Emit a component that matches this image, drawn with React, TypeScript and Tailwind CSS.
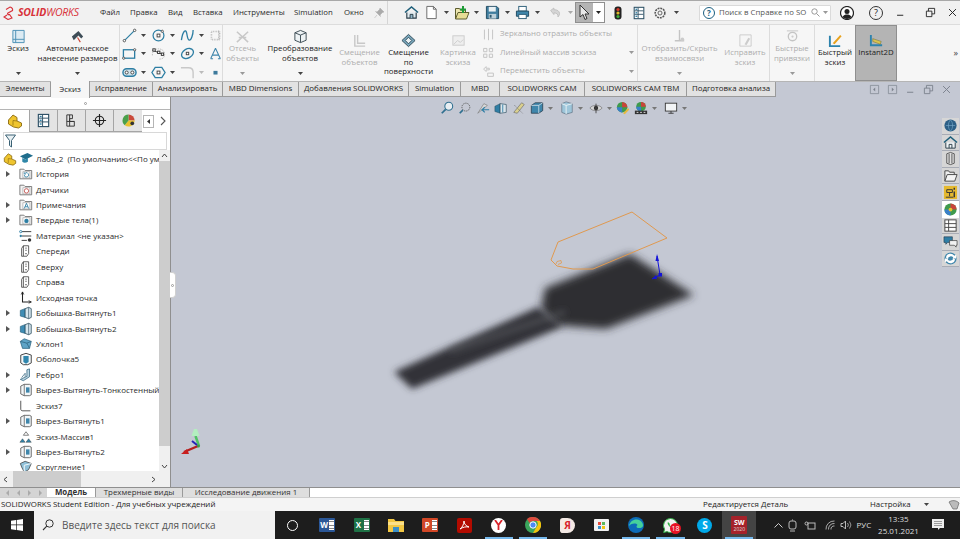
import React from "react";

type C = { children?: React.ReactNode; className?: string };

const Ico = ({ s = 16, children, className }: { s?: number; children: React.ReactNode; className?: string }) => (
  <svg width={s} height={s} viewBox="0 0 16 16" fill="none" className={className ?? "shrink-0"}>
    {children}
  </svg>
);

const Caret = ({ c = "#444" }: { c?: string }) => (
  <svg width="5" height="3" viewBox="0 0 5 3" className="shrink-0">
    <path d="M0 0h5L2.5 3z" fill={c} />
  </svg>
);

/* ---------- title bar icons ---------- */
const Home = () => (
  <Ico s={15}>
    <path d="M1 8 8 2l7 6" stroke="#1e5f7a" strokeWidth="1.6" />
    <path d="M3 8v6h10V8" stroke="#2a3d48" strokeWidth="1.2" fill="#dfe9ee" />
    <path d="M6.5 14v-4h3v4" stroke="#2a3d48" fill="#8fb5c7" />
  </Ico>
);
const Doc = () => (
  <Ico s={15}>
    <path d="M3 1.5h7l3 3v10H3z" stroke="#666" fill="#fff" />
    <path d="M10 1.5v3h3" stroke="#666" />
  </Ico>
);
const OpenI = () => (
  <Ico s={16}>
    <path d="M1.500 14V3.500h4l1 1.500h5v2" stroke="#5c5c2e" fill="#ece6b0" />
    <path d="M1.500 14 4 7.500h11L12.500 14z" stroke="#5c5c2e" fill="#e7dd95" />
    <path d="M9 1v7M6 4.500h6" stroke="#1f9b36" strokeWidth="2" />
  </Ico>
);
const Save = () => (
  <Ico s={15}>
    <path d="M1.500 1.500h11l2 2v11h-13z" fill="#3f7d9e" stroke="#1f4a60" />
    <rect x="4" y="2" width="7.500" height="5" fill="#e9f0f3" />
    <rect x="4" y="9.500" width="8" height="5" fill="#bcd0da" />
    <rect x="5" y="10.500" width="2" height="3" fill="#2c5870" />
  </Ico>
);
const Printer = () => (
  <Ico s={15}>
    <rect x="4" y="1.500" width="8" height="5" fill="#fff" stroke="#2b5d78" />
    <path d="M1.500 6.500h13v5.500h-13z" fill="#3f86ab" stroke="#1f4a60" />
    <rect x="4" y="10" width="8" height="4.500" fill="#fff" stroke="#2b5d78" />
  </Ico>
);
const Undo = () => (
  <Ico s={13}>
    <path d="M2 5.500 6 2.500v2c4 0 7 1.500 7 5 0 1.500-1 3-2 4 .5-3-1-5-5-5v2z" fill="#d5d5d5" stroke="#bbb" />
  </Ico>
);
const Pointer = () => (
  <svg width="14" height="17" viewBox="0 0 14 17" className="shrink-0">
    <path d="M2 1v12l3-2.500 2 5 2-1-2-4.500h4z" fill="#e8e8e8" stroke="#333" strokeWidth="1" />
  </svg>
);
const Traffic = () => (
  <svg width="8" height="14" viewBox="0 0 8 14" className="shrink-0">
    <rect x="0.500" y="0.500" width="7" height="13" rx="3" fill="#222" />
    <circle cx="4" cy="3.500" r="1.600" fill="#d83a2a" />
    <circle cx="4" cy="7" r="1.600" fill="#d9b82a" />
    <circle cx="4" cy="10.500" r="1.600" fill="#3fae3a" />
  </svg>
);
const ListI = ({ s = 14 }: { s?: number }) => (
  <Ico s={s}>
    <rect x="2.500" y="1.500" width="11" height="13" fill="#fff" stroke="#2c4f64" strokeWidth="1.200" />
    <path d="M3 5.500h10M3 9.500h10M7 2v12" stroke="#2c4f64" />
    <rect x="4" y="3" width="2" height="1.500" fill="#2d7ea3" />
    <rect x="4" y="7" width="2" height="1.500" fill="#2d7ea3" />
    <rect x="4" y="11" width="2" height="1.500" fill="#2d7ea3" />
  </Ico>
);
const Gear = () => (
  <Ico s={14}>
    <circle cx="8" cy="8" r="5.500" stroke="#555" strokeDasharray="2.200 1" strokeWidth="1.800" />
    <circle cx="8" cy="8" r="2.300" stroke="#555" />
  </Ico>
);

/* ---------- ribbon ---------- */
const RibbonCol = ({
  w,
  icon,
  lines,
  off,
  caret,
  top = "pt-[3px]",
}: {
  w: string;
  icon: React.ReactNode;
  lines: string[];
  off?: boolean;
  caret?: boolean;
  top?: string;
}) => (
  <div className={`${w} ${top} flex h-full shrink-0 flex-col items-center`}>
    <div className="flex h-[16px] items-center justify-center">{icon}</div>
    <div className={`text-center leading-[9.500px] ${off ? "text-[#adadad]" : "text-[#222]"}`}>
      {lines.map((l) => (
        <div key={l} className="whitespace-nowrap">
          {l}
        </div>
      ))}
    </div>
    {caret && (
      <div className="mt-auto pb-[6px]">
        <Caret c={off ? "#999" : "#444"} />
      </div>
    )}
  </div>
);

const Sep = () => <div className="h-full w-px shrink-0 bg-[#dcdcdc]" />;

const blue = "#2d7ea3";
const GridIcon = ({ d }: { d: React.ReactNode }) => <Ico s={15}>{d}</Ico>;

const sketchGrid: React.ReactNode[] = [
  <GridIcon key="a" d={<><path d="M2 14 14 2" stroke={blue} strokeWidth="1.300" /><circle cx="2.500" cy="13.500" r="1.300" fill="#fff" stroke="#555" /><circle cx="13.500" cy="2.500" r="1.300" fill="#fff" stroke="#555" /></>} />,
  <GridIcon key="b" d={<><circle cx="8" cy="8" r="5.800" stroke={blue} strokeWidth="1.300" /><rect x="6.500" y="6.500" width="3" height="3" fill="#fff" stroke="#444" /><circle cx="12" cy="3.500" r="1.200" fill="#fff" stroke="#555" /></>} />,
  <GridIcon key="c" d={<path d="M1.500 13C3 3 6 1 7 5s1 8 3 8 4-6 4-11" stroke={blue} strokeWidth="1.400" />} />,
  <GridIcon key="d" d={<><path d="M3 3h10v10H3z" stroke="#bbb" strokeWidth="2" strokeDasharray="1 1" /><path d="M12 2v12" stroke="#999" strokeDasharray="1 1" /></>} />,
  <GridIcon key="e" d={<><rect x="1.500" y="4" width="12" height="9" stroke={blue} strokeWidth="1.400" /><circle cx="1.800" cy="13" r="1.200" fill="#fff" stroke="#555" /><circle cx="13.500" cy="4" r="1.200" fill="#fff" stroke="#555" /></>} />,
  <GridIcon key="f" d={<><path d="M1.500 10C1 5 5 3 8 3s6.500 2 6.500 6-3 5-6 5" stroke="#bbb" strokeDasharray="1.500 1" /><path d="M1.500 4.500 8 7l5 2" stroke="#333" /><rect x="2" y="3" width="2.500" height="2.500" fill="#fff" stroke="#333" /><rect x="7" y="5.500" width="2.500" height="2.500" fill="#fff" stroke="#333" /><rect x="11" y="7.500" width="2.500" height="2.500" fill="#fff" stroke="#333" /></>} />,
  <GridIcon key="g" d={<><ellipse cx="8" cy="8" rx="6.800" ry="4.800" transform="rotate(-30 8 8)" stroke={blue} strokeWidth="1.400" /><rect x="6.700" y="6.700" width="2.600" height="2.600" fill="#fff" stroke="#444" /></>} />,
  <GridIcon key="h" d={<path d="M8 1.500 2 14.500M8 1.500l6 13M4.500 10h7M2 14.500h3M11 14.500h3" stroke="#3f86ab" strokeWidth="1.300" />} />,
  <GridIcon key="i" d={<><rect x="1" y="4" width="14" height="8" rx="4" stroke={blue} strokeWidth="1.500" fill="#cfe3ec" /><circle cx="5" cy="8" r="1.600" fill="#fff" stroke="#444" /><circle cx="11" cy="8" r="1.600" fill="#fff" stroke="#444" /></>} />,
  <GridIcon key="j" d={<><path d="M4.500 2.500h7L15 8l-3.500 5.500h-7L1 8z" stroke={blue} strokeWidth="1.400" /><rect x="6.500" y="6.500" width="3" height="3" fill="#fff" stroke="#444" /></>} />,
  <GridIcon key="k" d={<path d="M1 3h8c3 0 5 2 5 5v6" stroke="#c8c8c8" strokeWidth="1.500" />} />,
  <GridIcon key="l" d={<rect x="5.500" y="6" width="5" height="4.500" fill="#3d7a9c" />} />,
];

const Ribbon = () => (
  <div className="flex h-[56px] shrink-0 bg-[#f6f6f6] text-[7.800px]">
    <RibbonCol
      w="w-[36px]"
      lines={["Эскиз"]}
      caret
      icon={
        <Ico s={15}>
          <path d="M2 1.500h12v13H2z" fill="#dcebf3" stroke="#4b90b5" />
          <path d="M5 1.500v13M2 11h12" stroke="#4b90b5" />
        </Ico>
      }
    />
    <RibbonCol
      w="w-[83px]"
      lines={["Автоматическое", "нанесение размеров"]}
      caret
      icon={
        <Ico s={15}>
          <path d="M2 8 9 2l5 6-2 2-3-3-5 5z" fill="#3e4d57" />
          <path d="M8 9l3 5" stroke="#c43" strokeWidth="1.200" />
        </Ico>
      }
    />
    <Sep />
    <div className="grid w-[102px] shrink-0 grid-cols-[29px_29px_29px_13px] grid-rows-[repeat(3,18.500px)] pl-[2px] pt-[1px]">
      {sketchGrid.map((g, i) => (
        <div
          key={i}
          className={
            i % 4 === 3
              ? "flex items-center [&>svg]:h-[13px] [&>svg]:w-[13px]"
              : "flex items-center gap-[4px]"
          }
        >
          {g}
          {i % 4 !== 3 && <Caret c={i === 10 ? "#bbb" : "#444"} />}
        </div>
      ))}
    </div>
    <Sep />
    <RibbonCol
      w="w-[39px]"
      off
      caret
      lines={["Отсечь", "объекты"]}
      icon={
        <Ico s={15}>
          <path d="M2 14 14 3M2 3l12 11M4 9h8" stroke="#c8c8c8" strokeWidth="1.600" />
        </Ico>
      }
    />
    <RibbonCol
      w="w-[76px]"
      caret
      lines={["Преобразование", "объектов"]}
      icon={
        <Ico s={15}>
          <path d="M8 1.500 14 4v8l-6 2.500L2 12V4z" fill="#eef3f5" stroke="#3b4a52" />
          <path d="M2 4l6 2.500L14 4M8 6.500v8" stroke="#3b4a52" />
        </Ico>
      }
    />
    <RibbonCol
      w="w-[43px]"
      off
      top="pt-[7px]"
      lines={["Смещение", "объектов"]}
      icon={
        <Ico s={15}>
          <path d="M3 2v12h11M6 2v9h8" stroke="#c8c8c8" strokeWidth="1.500" />
        </Ico>
      }
    />
    <RibbonCol
      w="w-[55px]"
      top="pt-[7px]"
      lines={["Смещение", "по", "поверхности"]}
      icon={
        <Ico s={15}>
          <path d="M8 1.500 15 8l-7 6.500L1 8z" fill="#7aa8bd" stroke="#2f4a58" />
          <path d="M8 4.500 11.500 8 8 11.500 4.500 8z" fill="#e8f0f3" stroke="#2f4a58" />
        </Ico>
      }
    />
    <RibbonCol
      w="w-[44px]"
      off
      top="pt-[7px]"
      lines={["Картинка", "эскиза"]}
      icon={
        <Ico s={15}>
          <rect x="2" y="3" width="12" height="10" fill="#eee" stroke="#ccc" />
          <path d="M3 12l4-4 3 2 3-3" stroke="#ccc" />
        </Ico>
      }
    />
    <div className="flex w-[157px] shrink-0 flex-col pl-[2px] text-[#adadad]">
      {[
        { t: "Зеркально отразить объекты", c: false, d: "M3 2v12M13 2v12M8 1v14" },
        { t: "Линейный массив эскиза", c: true, d: "M2 3h4v4H2zM9 3h4v4H9zM2 10h4v4H2zM9 10h4v4H9z" },
        { t: "Переместить объекты", c: true, d: "M2 5l3-3v2h4v2H5v2zM7 10h7v4H7z" },
      ].map((r) => (
        <div key={r.t} className="flex h-[18.500px] items-center">
          <Ico s={13}>
            <path d={r.d} stroke="#c4c4c4" strokeWidth="1.200" />
          </Ico>
          <span className="ml-[5px] whitespace-nowrap">{r.t}</span>
          {r.c && (
            <span className="ml-auto mr-[3px]">
              <Caret c="#999" />
            </span>
          )}
        </div>
      ))}
    </div>
    <Sep />
    <RibbonCol
      w="w-[83px]"
      off
      caret
      lines={["Отобразить/Скрыть", "взаимосвязи"]}
      icon={
        <Ico s={15}>
          <path d="M8 1v11M3 12.500h10" stroke="#c4c4c4" strokeWidth="1.500" />
          <circle cx="11" cy="11" r="2" fill="#ccc" />
        </Ico>
      }
    />
    <RibbonCol
      w="w-[48px]"
      off
      top="pt-[7px]"
      lines={["Исправить", "эскиз"]}
      icon={
        <Ico s={15}>
          <path d="M2 2h12v12H2z" stroke="#ccc" />
          <path d="M7 12l4-7 2 1-4 7z" fill="#ccc" />
        </Ico>
      }
    />
    <Sep />
    <RibbonCol
      w="w-[44px]"
      off
      caret
      lines={["Быстрые", "привязки"]}
      icon={
        <Ico s={15}>
          <circle cx="8" cy="8" r="4.500" stroke="#c4c4c4" strokeWidth="1.400" />
          <path d="M2 2h12" stroke="#c4c4c4" />
          <circle cx="8" cy="8" r="1.200" fill="#ccc" />
        </Ico>
      }
    />
    <Sep />
    <RibbonCol
      w="w-[40px]"
      top="pt-[7px]"
      lines={["Быстрый", "эскиз"]}
      icon={
        <Ico s={15}>
          <path d="M2 3v11h11" stroke="#2d83ad" strokeWidth="2" />
          <path d="M5 11 13 2l1.500 1.500L7 12z" fill="#e8a21c" />
        </Ico>
      }
    />
    <div className="h-full w-[42px] shrink-0 border border-[#8f8f8f] bg-[#b4b4b4]">
      <RibbonCol
        w="w-full"
        top="pt-[6px]"
        lines={["Instant2D"]}
        icon={
          <Ico s={15}>
            <path d="M2 2v11h12" stroke="#2d83ad" strokeWidth="2" />
            <path d="M4 6l9 3-1 3-8-3z" fill="#d9c350" stroke="#6a6a2a" strokeWidth="0.500" />
          </Ico>
        }
      />
    </div>
    <div className="ml-auto flex items-center pb-[1px] pr-[2px] text-[9px] text-[#444]">»</div>
  </div>
);

/* ---------- tabs ---------- */
const tabs: [string, string][] = [
  ["Элементы", "w-[51px]"],
  ["Эскиз", "w-[39px]"],
  ["Исправление", "w-[63px]"],
  ["Анализировать", "w-[70px]"],
  ["MBD Dimensions", "w-[76px]"],
  ["Добавления SOLIDWORKS", "w-[110px]"],
  ["Simulation", "w-[52px]"],
  ["MBD", "w-[39px]"],
  ["SOLIDWORKS CAM", "w-[85px]"],
  ["SOLIDWORKS CAM TBM", "w-[102px]"],
  ["Подготовка анализа", "w-[89px]"],
];

const WinGlyph = ({ k, c }: { k: string; c: string }) => (
  <Ico s={11}>
    {k === "min" && <path d="M3 12h9" stroke={c} strokeWidth="1.400" />}
    {k === "max" && <path d="M2 6h8v8H2zM5 6V2h9v8h-4" stroke={c} strokeWidth="1.300" />}
    {k === "x" && <path d="M3 3l10 10M13 3 3 13" stroke={c} strokeWidth="1.400" />}
    {k === "l" && (
      <>
        <path d="M2 2h12v12H2z" stroke={c} />
        <path d="M9 5 6 8l3 3z" fill={c} />
      </>
    )}
    {k === "r" && (
      <>
        <path d="M2 2h12v12H2z" stroke={c} />
        <path d="M7 5l3 3-3 3z" fill={c} />
      </>
    )}
  </Ico>
);

const TabRow = () => (
  <div className="flex h-[16px] shrink-0 border-t border-[#b5b5b5] bg-[#c4c8d3] text-[7.900px] text-[#222]">
    {tabs.map(([t, w]) => (
      <div
        key={t}
        className={
          t === "Эскиз"
            ? `${w} z-10 -mt-px flex h-[17px] shrink-0 items-center justify-center border-r border-[#9a9a9a] bg-[#f6f6f6] whitespace-nowrap`
            : `${w} flex shrink-0 items-center justify-center border-r border-b border-[#9a9a9a] bg-[#e2e2e2] whitespace-nowrap`
        }
      >
        {t}
      </div>
    ))}
    <div className="ml-auto flex items-center gap-[7px] pb-[1px] pr-[8px]">
      <WinGlyph k="l" c="#7b818c" />
      <WinGlyph k="r" c="#7b818c" />
      <WinGlyph k="min" c="#7b818c" />
      <WinGlyph k="max" c="#7b818c" />
      <WinGlyph k="x" c="#7b818c" />
    </div>
  </div>
);

/* ---------- tree ---------- */
const Part = ({ s = 14 }: { s?: number }) => (
  <Ico s={s}>
    <path d="M1.500 7 6 2l4 2.500V8l4.500 2v3l-3 2-5-1-5-3z" fill="#efc52f" stroke="#8a6a10" strokeWidth="0.900" />
    <path d="M6 7.500 10 8M6 7.500v5" stroke="#8a6a10" strokeWidth="0.700" />
  </Ico>
);
const Hat = () => (
  <Ico s={15}>
    <path d="M1 5.500 9 2l6 3-8 4z" fill="#1f6d8c" />
    <path d="M3.500 7.500v4c2 1.500 4 1 6 0V7l-2.500 2z" fill="#2f87a8" />
  </Ico>
);
const Folder = ({ inner }: { inner: React.ReactNode }) => (
  <Ico s={14}>
    <path d="M1 13.500V2.500h4.500L7 4h7.500v9.500z" fill="#f4f4f4" stroke="#707070" />
    <rect x="4.500" y="5.500" width="8" height="7" fill="#fff" stroke="#8b8b8b" strokeWidth="0.600" />
    {inner}
  </Ico>
);
const Plane = () => (
  <Ico s={14}>
    <path d="M5 2h6M5 14h-2V5l2-3v12M11 2v9l-2 3H5" stroke="#3a3a3a" strokeWidth="0.900" />
    <path d="M8 4v5" stroke="#3a3a3a" strokeDasharray="1.500 1" />
    <circle cx="8" cy="11" r="0.800" fill="#333" />
  </Ico>
);
const Boss = () => (
  <Ico s={14}>
    <path d="M1.500 5 7 3v10l-5.500-1.500z" fill="#3f8db5" stroke="#235a76" strokeWidth="0.700" />
    <path d="M7 3l4-1.500 3 1.500v10l-3 1.500L7 13z" fill="#d6e6ee" stroke="#2a4b5c" strokeWidth="0.900" />
    <path d="M11 1.500v13" stroke="#2a4b5c" strokeWidth="0.700" />
  </Ico>
);
const Cut = () => (
  <Ico s={14}>
    <path d="M2 3.500 6 1.500h6l2 1v11l-2 1H6l-4-2z" fill="#f2f6f8" stroke="#4a4a4a" strokeWidth="0.900" />
    <path d="M6 1.500v13" stroke="#4a4a4a" strokeWidth="0.800" />
    <rect x="8" y="5" width="4" height="6" fill="#3f86ab" />
  </Ico>
);

const treeRows: { t: string; arrow?: boolean; icon: React.ReactNode }[] = [
  { t: "История", arrow: true, icon: <Folder inner={<path d="M6 9a2.500 2.500 0 1 0 1-2M6 6v2h2" stroke="#2d7ea3" strokeWidth="0.900" />} /> },
  { t: "Датчики", icon: <Folder inner={<circle cx="8.500" cy="9" r="2.500" stroke="#c0504d" />} /> },
  { t: "Примечания", arrow: true, icon: <Folder inner={<path d="M6 12l2.500-6 2.500 6M7 10h3" stroke="#2d7ea3" />} /> },
  { t: "Твердые тела(1)", arrow: true, icon: <Folder inner={<circle cx="8.500" cy="9" r="2.500" fill="#2d7ea3" />} /> },
  {
    t: "Материал <не указан>",
    icon: (
      <Ico s={14}>
        <path d="M3 3h11M3 8h11M3 13h6" stroke="#3a3a3a" strokeWidth="1.100" />
        <circle cx="2" cy="3" r="1.300" fill="#fff" stroke="#2d7ea3" />
        <circle cx="2" cy="8" r="1.300" fill="#2d7ea3" />
        <circle cx="12" cy="12.500" r="2" fill="#333" />
      </Ico>
    ),
  },
  { t: "Спереди", icon: <Plane /> },
  { t: "Сверху", icon: <Plane /> },
  { t: "Справа", icon: <Plane /> },
  {
    t: "Исходная точка",
    icon: (
      <Ico s={14}>
        <path d="M4 1v11.500h10" stroke="#222" strokeWidth="1.200" />
        <path d="M2.500 4 4 1l1.500 3M11 11l3 1.500-3 1.500" stroke="#222" strokeWidth="0.900" />
      </Ico>
    ),
  },
  { t: "Бобышка-Вытянуть1", arrow: true, icon: <Boss /> },
  { t: "Бобышка-Вытянуть2", arrow: true, icon: <Boss /> },
  {
    t: "Уклон1",
    icon: (
      <Ico s={14}>
        <path d="M1.500 5 6 2l8 3-2 8H4z" fill="#5fa4c6" stroke="#2a5f7a" strokeWidth="0.800" />
        <path d="M1.500 5 9 7l5-2M9 7l3 6" stroke="#2a5f7a" strokeWidth="0.800" />
      </Ico>
    ),
  },
  {
    t: "Оболочка5",
    icon: (
      <Ico s={14}>
        <path d="M2 3.500 8 1.500l6 2v9l-4 2H5l-3-2z" fill="#f2f6f8" stroke="#333" />
        <path d="M5 4.500h6v7l-3 2-3-2z" fill="#2f86ad" />
      </Ico>
    ),
  },
  {
    t: "Ребро1",
    arrow: true,
    icon: (
      <Ico s={14}>
        <path d="M1.500 13 9 9.500V2l3-1v9l-7 4.500z" fill="#b9d3e0" stroke="#2a5f7a" strokeWidth="0.800" />
        <path d="M3 11l4-5v4" stroke="#2a5f7a" strokeWidth="0.800" />
      </Ico>
    ),
  },
  { t: "Вырез-Вытянуть-Тонкостенный1", arrow: true, icon: <Cut /> },
  {
    t: "Эскиз7",
    icon: (
      <Ico s={14}>
        <path d="M2 2v9.500c0 1.500 1 2 2.500 2H13" stroke="#444" />
      </Ico>
    ),
  },
  { t: "Вырез-Вытянуть1", arrow: true, icon: <Cut /> },
  {
    t: "Эскиз-Массив1",
    icon: (
      <Ico s={14}>
        <path d="M1 14l3-4 3 4zM8 14l3-4 3 4z" fill="#2f86ad" stroke="#333" strokeWidth="0.500" />
        <path d="M5 6l3-4 3 4z" fill="#fff" stroke="#333" strokeWidth="0.700" />
      </Ico>
    ),
  },
  { t: "Вырез-Вытянуть2", arrow: true, icon: <Cut /> },
  {
    t: "Скругление1",
    icon: (
      <Ico s={14}>
        <path d="M1.500 4 7 1.500l7 2.500-3 7-5 3-3-6z" fill="#8fc0d8" stroke="#333" strokeWidth="0.800" />
        <path d="M6 14V6l8-2" stroke="#fff" />
      </Ico>
    ),
  },
];

const TreeRow = ({ t, arrow, icon }: { t: string; arrow?: boolean; icon: React.ReactNode }) => (
  <div className="flex h-[15.450px] items-center">
    <div className="flex w-[19px] shrink-0 justify-center pr-[3px]">
      {arrow && (
        <svg width="4" height="6" viewBox="0 0 4 6">
          <path d="M0 0l4 3-4 3z" fill="#555" />
        </svg>
      )}
    </div>
    <div className="w-[17px] shrink-0">{icon}</div>
    <span className="whitespace-nowrap">{t}</span>
  </div>
);

const PanelTab = ({ w, active, children }: C & { w: string; active?: boolean }) => (
  <div
    className={
      active
        ? `${w} flex h-full shrink-0 items-center justify-center bg-white`
        : `${w} flex h-full shrink-0 items-center justify-center border-b border-l border-[#a5a5a5] bg-[#e4e4e4]`
    }
  >
    {children}
  </div>
);

const Panel = () => (
  <div className="relative flex w-[171px] shrink-0 flex-col overflow-visible border-r border-[#8f8f8f] bg-white text-[8px] text-[#2a2a2a]">
    <div className="flex h-[13px] shrink-0 items-center justify-center border-b border-[#b5b5b5]">
      <div className="h-[3px] w-[3px] rounded-full border border-[#999]" />
    </div>
    <div className="flex h-[22px] shrink-0 items-stretch pr-[4px]">
      <PanelTab w="w-[29px]" active>
        <Part s={16} />
      </PanelTab>
      <PanelTab w="w-[28px]">
        <ListI s={15} />
      </PanelTab>
      <PanelTab w="w-[28px]">
        <Ico s={15}>
          <path d="M3 2h6v4H6v3h5v5H3z" stroke="#333" />
          <path d="M6 2v12M3 9h8" stroke="#333" />
        </Ico>
      </PanelTab>
      <PanelTab w="w-[28px]">
        <Ico s={15}>
          <circle cx="8" cy="8" r="4.500" stroke="#222" strokeWidth="1.200" />
          <path d="M8 1v14M1 8h14" stroke="#222" strokeWidth="1.200" />
        </Ico>
      </PanelTab>
      <PanelTab w="w-[29px]">
        <Ico s={15}>
          <path d="M8 1.500a6.500 6.500 0 0 1 6.500 6.500H8z" fill="#c94a3a" />
          <path d="M14.500 8A6.500 6.500 0 0 1 4 13l4-5z" fill="#e9c12e" />
          <path d="M4 13A6.500 6.500 0 0 1 8 1.500V8z" fill="#4aa04a" />
          <circle cx="12" cy="11" r="2" fill="#333" />
        </Ico>
      </PanelTab>
      <div className="flex shrink-0 items-center pl-[1px]">
        <div className="flex h-[13px] w-[11px] items-center justify-center border border-[#b5b5b5] bg-white">
          <svg width="3" height="5" viewBox="0 0 3 5">
            <path d="M3 0v5L0 2.500z" fill="#333" />
          </svg>
        </div>
        <svg width="8" height="10" viewBox="0 0 8 10" className="ml-[5px]">
          <path d="M2 1l4 4-4 4" stroke="#555" strokeWidth="1.100" fill="none" />
        </svg>
      </div>
    </div>
    <div className="mx-[3px] flex h-[18px] shrink-0 items-center border border-[#d8d8d8] pl-[1px]">
      <svg width="11" height="14" viewBox="0 0 11 14">
        <path d="M0.500 1h10L6.500 6.500V13L4.500 11.500V6.500z" fill="#e8f0f3" stroke="#3a6174" />
      </svg>
    </div>
    <div className="flex min-h-0 flex-1">
      <div className="min-w-0 flex-1 overflow-hidden pt-[1px]">
        <div className="flex h-[15.450px] items-center pl-[3px]">
          <div className="w-[16px] shrink-0">
            <Part s={14} />
          </div>
          <div className="w-[17px] shrink-0">
            <Hat />
          </div>
          <span className="whitespace-pre">Лаба_2  (По умолчанию&lt;&lt;По умолчанию&gt;)</span>
        </div>
        {treeRows.map((r) => (
          <TreeRow key={r.t} {...r} />
        ))}
      </div>
      <div className="flex w-[11px] shrink-0 flex-col items-center bg-[#f0f0f0]">
        <svg width="7" height="11" viewBox="0 0 7 11" className="shrink-0">
          <path d="M1 7l2.500-3L6 7" stroke="#444" fill="none" />
        </svg>
        <div className="w-full flex-1 bg-[#cdcdcd]" />
        <svg width="7" height="25" viewBox="0 0 7 25" className="shrink-0">
          <path d="M1 19l2.500 3L6 19" stroke="#444" fill="none" />
        </svg>
      </div>
    </div>
    <div className="flex h-[16px] shrink-0 items-center bg-[#f0f0f0] pr-[11px]">
      <svg width="13" height="7" viewBox="0 0 13 7" className="shrink-0">
        <path d="M7 1 4 3.500 7 6" stroke="#444" fill="none" />
      </svg>
      <div className="h-full w-[68px] bg-[#cdcdcd]" />
      <svg width="7" height="7" viewBox="0 0 7 7" className="ml-auto mr-[2px] shrink-0">
        <path d="M2 1l3 2.500L2 6" stroke="#444" fill="none" />
      </svg>
    </div>
    <div className="absolute left-[170px] top-[175px] z-10 flex h-[26px] w-[6px] items-center justify-center rounded-r-sm border border-l-0 border-[#d0d0d0] bg-white">
      <div className="h-[3px] w-[3px] rounded-full border border-[#999]" />
    </div>
  </div>
);

/* ---------- viewport ---------- */
const HudIcon = ({ children }: C) => <Ico s={14}>{children}</Ico>;

const Hud = () => (
  <div className="absolute left-[269px] top-[4px] flex items-center gap-[4px]">
    <HudIcon>
      <circle cx="10" cy="6" r="4.500" fill="#e8eef2" stroke="#2f6f8f" strokeWidth="1.200" />
      <path d="M6.500 9.500 2 14" stroke="#2f6f8f" strokeWidth="2" />
    </HudIcon>
    <HudIcon>
      <circle cx="9" cy="7" r="4.500" stroke="#555" strokeDasharray="1.500 1" />
      <path d="M5.500 10.500 2 14" stroke="#2f6f8f" strokeWidth="2" />
    </HudIcon>
    <HudIcon>
      <path d="M2 14 9 3l4 2z" fill="#d8d8d8" stroke="#777" strokeWidth="0.700" />
      <path d="M15 10H7l3-3M7 10l3 3" stroke="#2f7ea5" strokeWidth="1.300" />
    </HudIcon>
    <HudIcon>
      <path d="M1 6l6-3v11l-6-2z" fill="#2f7ea5" stroke="#245" strokeWidth="0.500" />
      <path d="M7 3l7 1v9l-7 1z" fill="#dbe6ec" stroke="#245" strokeWidth="0.700" />
      <path d="M10 4v9" stroke="#2f7ea5" />
    </HudIcon>
    <HudIcon>
      <path d="M2 13 11 2l3 2-8 10z" fill="#d9cf8d" stroke="#666" strokeWidth="0.700" />
      <path d="M3 5l9 9" stroke="#666" strokeDasharray="1 1" />
    </HudIcon>
    <HudIcon>
      <path d="M1.500 5 6 2h8.500v9L10 14H1.500z" fill="#3f86ab" stroke="#234" strokeWidth="0.800" />
      <path d="M1.500 5H10v9M10 5l4.500-3" stroke="#e8eef2" strokeWidth="0.800" />
    </HudIcon>
    <span className="mr-[3px]">
      <Caret c="#777" />
    </span>
    <HudIcon>
      <path d="M2 3l5-2 7 2v10l-7 2-5-2z" fill="#9ec6da" stroke="#567" strokeWidth="0.700" />
      <path d="M7 5v10M2 3l5 2 7-2" stroke="#f0f5f7" />
    </HudIcon>
    <span className="mr-[2px]">
      <Caret c="#777" />
    </span>
    <HudIcon>
      <path d="M1 8c3-4 11-4 14 0-3 4-11 4-14 0z" fill="#d7d7d7" stroke="#666" strokeWidth="0.700" />
      <circle cx="8" cy="8" r="2.500" fill="#333" />
      <path d="M8 3v11" stroke="#444" />
    </HudIcon>
    <Caret c="#777" />
    <HudIcon>
      <circle cx="7" cy="7" r="6" fill="#3f9a4c" />
      <path d="M7 1a6 6 0 0 1 6 6H7z" fill="#c9443a" />
      <path d="M1 7a6 6 0 0 0 6 6V7z" fill="#3a7fc9" />
      <path d="M8 14l6-6 1 2-5 5z" fill="#e8b93a" />
    </HudIcon>
    <HudIcon>
      <circle cx="8" cy="6.500" r="5.500" fill="#3f9a4c" />
      <path d="M8 1a5.500 5.500 0 0 1 5.500 5.500H8z" fill="#c9443a" />
      <path d="M2.500 6.500A5.500 5.500 0 0 0 8 12V6.500z" fill="#3a7fc9" />
      <rect x="1" y="11" width="14" height="4" fill="#333" />
      <path d="M3 13h2M7 13h2M11 13h2" stroke="#eee" />
    </HudIcon>
    <span className="mr-[3px]">
      <Caret c="#777" />
    </span>
    <HudIcon>
      <rect x="1.500" y="2.500" width="13" height="9" fill="#f2f4f6" stroke="#333" />
      <path d="M8 11.500V14M5 14h6" stroke="#333" />
    </HudIcon>
    <Caret c="#777" />
  </div>
);

const TaskPane = () => {
  const items: React.ReactNode[] = [
    <><circle cx="8" cy="8" r="6.500" fill="#2c5f86" /><path d="M3 8h10M8 2c-3 3-3 9 0 12M8 2c3 3 3 9 0 12" stroke="#7fb0cf" strokeWidth="0.600" /></>,
    <><path d="M1 8 8 2l7 6" stroke="#1e5f7a" strokeWidth="1.600" /><path d="M3 8v6h10V8" stroke="#2a3d48" fill="#eef3f5" /><path d="M6.500 14v-4h3v4" stroke="#2a3d48" /></>,
    <><path d="M4 3 8 1.500l4 1.500v10L8 14.500 4 13z" fill="#dedede" stroke="#555" /><path d="M6.500 3v10M9.500 3v10" stroke="#555" /></>,
    <><path d="M2 14V3h4l1 1.500h5V7" stroke="#444" fill="#eee" /><path d="M2 14l2.500-7H15l-2.500 7z" fill="#f4f4f4" stroke="#444" /></>,
    <><rect x="1" y="1" width="14" height="14" fill="#e5b92f" /><path d="M4 5h6v3H4zM7 8v4M3 13h8" stroke="#333" /><path d="M12 3v2M12 7v6" stroke="#333" strokeWidth="1.500" /></>,
    <><circle cx="8" cy="8" r="6.500" fill="#3f9a4c" /><path d="M8 1.500A6.500 6.500 0 0 1 14.500 8H8z" fill="#c9443a" /><path d="M1.500 8A6.500 6.500 0 0 0 8 14.500V8z" fill="#3a7fc9" /><circle cx="8" cy="8" r="2" fill="#e8c42e" /></>,
    <><rect x="2" y="2" width="12" height="12" fill="#fff" stroke="#444" /><path d="M2 6h12M2 10h12M6 2v12" stroke="#444" /></>,
    <><path d="M1 3h9v6H5l-2 2V9H1z" fill="#2f7ea5" stroke="#234" strokeWidth="0.600" /><path d="M7 7h8v5h-1v2l-2-2H7z" fill="#f2f2f2" stroke="#333" strokeWidth="0.700" /></>,
    <><circle cx="8" cy="8" r="6.500" fill="#3f86ab" /><path d="M3 7a5 5 0 0 1 9-2l2-1v4h-4l1-1a3.500 3.500 0 0 0-6 1zM13 9a5 5 0 0 1-9 2l-2 1V8h4l-1 1a3.500 3.500 0 0 0 6-1z" fill="#fff" /></>,
  ];
  return (
    <div className="absolute right-[1px] top-[21px] flex w-[17px] flex-col">
      {items.map((it, i) => (
        <div
          key={i}
          className={
            i === 5
              ? "flex h-[16.600px] items-center justify-center bg-white"
              : "flex h-[16.600px] items-center justify-center border-b border-[#a8acb5] bg-[#d6d6d6]"
          }
        >
          <Ico s={15}>{it}</Ico>
        </div>
      ))}
    </div>
  );
};

const Scene = () => (
  <svg className="absolute inset-0 h-full w-full" viewBox="171 97 789 390" fill="none">
    <defs>
      <filter id="soft" x="-20%" y="-20%" width="140%" height="140%">
        <feGaussianBlur stdDeviation="4.500" />
      </filter>
      <filter id="soft2" x="-20%" y="-40%" width="140%" height="180%">
        <feGaussianBlur stdDeviation="3.800" />
      </filter>
    </defs>
    <g filter="url(#soft)">
      <path d="M545 288 630 254 694 295 606 329 553 325 541 308z" fill="#2e2f33" />
    </g>
    <g filter="url(#soft2)">
      <path d="M394 372 538 307 562 326 550 332 412 389z" fill="#323338" />
    </g>
    <g filter="url(#soft2)">
      <path d="M450 351 565 312" stroke="#5c5e63" strokeWidth="3" />
    </g>
    <path d="M632 212 667 238 593 269 573 269 557 266 551 260 558 242z" stroke="#e0994f" strokeWidth="1" />
    <path d="M556 264 557 261.500 561 260.500 561.500 263 558 264.500" stroke="#e0994f" strokeWidth="0.800" />
    <path d="M660 275 657 256" stroke="#1414d8" strokeWidth="1" />
    <path d="M655.500 261 657 254 659 261z" fill="#1414d8" />
    <path d="M660 275 652 279" stroke="#1414d8" strokeWidth="1" />
    <path d="M652 279 656 275 657 279z" fill="#1414d8" />
    <rect x="658.500" y="273" width="3.500" height="3.500" fill="#1414d8" />

    <path d="M199 446 195.500 436" stroke="#4fc264" strokeWidth="2.500" />
    <path d="M191.500 436 199.500 436 197 429 194 429z" fill="#b4eec0" />
    <path d="M198 446 184 452" stroke="#b32020" strokeWidth="2.400" />
    <path d="M187 449 181 454 189 454z" fill="#c81e1e" />
    <path d="M197 445 192 441" stroke="#2424b8" strokeWidth="2" />
    <circle cx="198.500" cy="446" r="1.500" fill="#3a9a4a" />
  </svg>
);

/* ---------- taskbar ---------- */
const TaskItem = ({ on, active, children }: C & { on?: boolean; active?: boolean }) => (
  <div
    className={`relative flex h-full w-[34.350px] shrink-0 items-center justify-center ${
      active ? "bg-[#444]" : ""
    }`}
  >
    {children}
    {on && <div className="absolute bottom-0 left-[3px] right-[3px] h-[2px] bg-[#76b9ed]" />}
  </div>
);

const Office = ({ bg, t }: { bg: string; t: string }) => (
  <div className={`flex h-[14px] w-[16px] items-center rounded-[1px] ${bg}`}>
    <span className="w-[10px] text-center text-[8px] font-bold leading-none text-white">{t}</span>
    <span className="flex h-[10px] w-[5px] flex-col justify-between bg-white py-[1px]">
      <span className="h-px bg-[#888]" />
      <span className="h-px bg-[#888]" />
      <span className="h-px bg-[#888]" />
    </span>
  </div>
);

const Taskbar = () => (
  <div className="flex h-[28px] shrink-0 items-stretch bg-[#1d1d1d] text-white">
    <div className="flex w-[34px] shrink-0 items-center justify-center">
      <svg width="12" height="12" viewBox="0 0 12 12">
        <path d="M0 1.700 5 1v4.500H0zM5.700.9 12 0v5.500H5.700zM0 6.200h5v4.700L0 10.200zM5.700 6.200H12V12L5.700 11.100z" fill="#fff" />
      </svg>
    </div>
    <div className="flex w-[241px] shrink-0 items-center bg-[#f1f1f1] pl-[8px] text-[10px] text-[#555]">
      <svg width="12" height="12" viewBox="0 0 12 12" fill="none" className="shrink-0">
        <circle cx="7.500" cy="4.500" r="3.700" stroke="#333" />
        <path d="M4.800 7.200 1 11" stroke="#333" strokeWidth="1.100" />
      </svg>
      <span className="ml-[8px] whitespace-nowrap">Введите здесь текст для поиска</span>
    </div>
    <div className="flex w-[35px] shrink-0 items-center justify-center">
      <div className="h-[11px] w-[11px] rounded-full border-[1.500px] border-white" />
    </div>
    <TaskItem>
      <Office bg="bg-[#2b5797]" t="W" />
    </TaskItem>
    <TaskItem>
      <Office bg="bg-[#1e7145]" t="X" />
    </TaskItem>
    <TaskItem>
      <svg width="16" height="14" viewBox="0 0 16 14">
        <path d="M0 1h6l1.500 2H16v11H0z" fill="#f2c744" />
        <rect x="0" y="4" width="16" height="3" fill="#fbe08a" />
        <rect x="5" y="9" width="6" height="5" fill="#3a8fc9" />
      </svg>
    </TaskItem>
    <TaskItem>
      <Office bg="bg-[#d24726]" t="P" />
    </TaskItem>
    <TaskItem>
      <div className="flex h-[15px] w-[15px] items-center justify-center rounded-[2px] bg-[#b30b00]">
        <svg width="11" height="11" viewBox="0 0 11 11" fill="none">
          <path d="M1 9c2-1 4-5 4-8 0 3 2 5 5 6-3-.5-6 0-9 2z" stroke="#fff" />
        </svg>
      </div>
    </TaskItem>
    <TaskItem on>
      <div className="flex h-[15px] w-[15px] items-center justify-center rounded-full bg-white">
        <svg width="9" height="10" viewBox="0 0 9 10">
          <path d="M1 0l3.500 5V10M8 0 4.500 5" stroke="#d8232a" strokeWidth="1.800" fill="none" />
        </svg>
      </div>
    </TaskItem>
    <TaskItem on>
      <svg width="16" height="16" viewBox="0 0 16 16">
        <circle cx="8" cy="8" r="8" fill="#3ba55c" />
        <path d="M8 0a8 8 0 0 1 7 4H8a4 4 0 0 0-3.500 2L2 2a8 8 0 0 1 6-2z" fill="#dd4b3e" />
        <path d="M15 4a8 8 0 0 1-7 12l3.500-6a4 4 0 0 0 0-6z" fill="#f4c20d" />
        <circle cx="8" cy="8" r="3.200" fill="#4a8af4" stroke="#fff" />
      </svg>
    </TaskItem>
    <TaskItem>
      <div className="flex h-[15px] w-[15px] items-center justify-center rounded-l-[3px] rounded-r-[8px] bg-[#f4e9e4]">
        <span className="text-[10px] font-bold leading-none text-[#d8232a]">Я</span>
      </div>
    </TaskItem>
    <TaskItem>
      <div className="grid h-[12px] w-[15px] grid-cols-2 place-content-center gap-[1px] rounded-[1px] bg-[#f2f2f2] px-[4px] pt-[1px]">
        <span className="h-[3px] w-[3px] bg-[#e74c3c]" />
        <span className="h-[3px] w-[3px] bg-[#5cb85c]" />
        <span className="h-[3px] w-[3px] bg-[#3a8fc9]" />
        <span className="h-[3px] w-[3px] bg-[#f1c40f]" />
      </div>
    </TaskItem>
    <TaskItem on>
      <svg width="16" height="16" viewBox="0 0 16 16">
        <circle cx="8" cy="8" r="8" fill="#0c6bb8" />
        <path d="M1 9c1-5 5-7 8-6.500 4 .6 6 3.500 6 6 0 2-2 2.500-4 2.500-1.500 0-2.500-.5-2.500-1.500 0-.5.5-1 1-1.500C8 6 4 6 1 9z" fill="#45d19c" />
      </svg>
    </TaskItem>
    <TaskItem on>
      <div className="relative">
        <svg width="15" height="15" viewBox="0 0 15 15">
          <path d="M7.500 0.500a7 7 0 0 1 0 14c-1.300 0-2.400-.3-3.400-.9L.7 14.500l.9-3.200A7 7 0 0 1 7.500.5z" fill="#f2f2f2" stroke="#2fb344" />
          <path d="M5 4c-1 1 0 3 1.500 4.500S10 11 11 10l-1.500-1.500-1 .5-2-2 .5-1z" fill="#2fb344" />
        </svg>
        <span className="absolute left-[7px] top-[5px] flex h-[11px] w-[11px] items-center justify-center rounded-full bg-[#e81123] text-[7px] leading-none">
          18
        </span>
      </div>
    </TaskItem>
    <TaskItem>
      <div className="flex h-[15px] w-[15px] items-center justify-center rounded-full bg-[#00a9e9] text-[10px] font-bold leading-none">
        S
      </div>
    </TaskItem>
    <TaskItem on active>
      <div className="flex h-[18px] w-[16px] flex-col items-center justify-center gap-[1px] rounded-[1px] bg-[#a5222a]">
        <span className="text-[7px] font-bold leading-[7px]">SW</span>
        <span className="text-[5px] leading-[5px] text-[#ddd]">2020</span>
      </div>
    </TaskItem>
    <div className="flex min-w-0 flex-1 items-center text-[8px] text-[#ddd]">
      <div className="flex w-[31px] shrink-0 justify-end pr-[4px]">
        <svg width="9" height="5" viewBox="0 0 9 5" fill="none">
          <path d="M.5 4.500 4.500.5l4 4" stroke="#ccc" />
        </svg>
      </div>
      <div className="w-[17px] shrink-0 pl-[1px]">
        <svg width="9" height="13" viewBox="0 0 9 13" fill="none">
          <rect x="1" y="2" width="7" height="8" rx="2" stroke="#bbb" />
          <path d="M2 12h5M4.500 .5v1" stroke="#bbb" />
        </svg>
      </div>
      <div className="w-[21px] shrink-0">
        <svg width="12" height="9" viewBox="0 0 12 9" fill="none">
          <rect x="4" y="2" width="7" height="6" stroke="#bbb" />
          <circle cx="2.500" cy="2.500" r="1.500" stroke="#bbb" />
        </svg>
      </div>
      <div className="w-[15px] shrink-0">
        <svg width="11" height="10" viewBox="0 0 11 10" fill="none">
          <path d="M1 9.500A8 8 0 0 1 9.500 1M3.500 9.500A5.500 5.500 0 0 1 9.500 3.500M6 9.500A3 3 0 0 1 9.500 6" stroke="#aaa" />
        </svg>
      </div>
      <div className="w-[16px] shrink-0">
        <svg width="12" height="10" viewBox="0 0 12 10" fill="none">
          <path d="M1 3.500h2L5.500 1v8L3 6.500H1z" stroke="#bbb" />
          <path d="M7.500 3a3 3 0 0 1 0 4M9.500 1.500a5.500 5.500 0 0 1 0 7" stroke="#999" />
        </svg>
      </div>
      <span className="w-[20px] shrink-0">РУС</span>
      <div className="w-[44px] shrink-0 text-center leading-[12px]">
        <div>13:35</div>
        <div>25.01.2021</div>
      </div>
      <div className="flex w-[26px] shrink-0 justify-end pr-[2px]">
        <svg width="12" height="12" viewBox="0 0 12 12">
          <path d="M0 0h12v9H8l-2 2V9H0z" fill="#eee" />
          <path d="M2 2.500h8M2 4.500h8M2 6.500h8" stroke="#777" strokeWidth="0.700" />
        </svg>
      </div>
    </div>
  </div>
);

export default function App() {
  return (
    <div className="flex h-[539px] w-[960px] flex-col overflow-hidden bg-white font-['Open_Sans','Noto_Sans',sans-serif]">
      {/* title bar */}
      <div className="flex h-[25px] shrink-0 items-center border-t border-b border-t-[#a8a8a8] border-b-[#dcdcdc] bg-[#f1f1f1] text-[7.800px] text-[#2a2a2a]">
        <div className="flex w-[100px] shrink-0 items-center pl-[3px]">
          <svg width="14" height="14" viewBox="0 0 14 14" fill="none">
            <path d="M3 3.500 7 1c2 .5 3 2 2.500 3.500L5 7c-1 1 0 2 1.500 1.500L9 12 5 13.500 1 11l3-2" stroke="#d8323a" strokeWidth="1.100" />
          </svg>
          <span className="ml-[1px] text-[10.500px] font-bold italic leading-none tracking-[-0.2px] text-[#d8323a]">
            SOLID<span className="font-normal">WORKS</span>
          </span>
        </div>
        <span className="w-[30px] shrink-0">Файл</span>
        <span className="w-[38px] shrink-0">Правка</span>
        <span className="w-[25px] shrink-0">Вид</span>
        <span className="w-[40px] shrink-0">Вставка</span>
        <span className="w-[61px] shrink-0">Инструменты</span>
        <span className="w-[50px] shrink-0">Simulation</span>
        <span className="w-[30px] shrink-0">Окно</span>
        <svg width="10" height="10" viewBox="0 0 10 10" className="shrink-0">
          <path d="M6 0l4 4-1.500.5L6 7 6.500 8.500 1.500 3.500 3 4l2.500-2.500zM3 7l-2.500 3" fill="#aaa" stroke="#aaa" strokeWidth="0.500" />
        </svg>
        <div className="ml-[3px] h-full w-px shrink-0 bg-[#d5d5d5]" />
        <div className="flex w-[32px] shrink-0 justify-center pl-[14px]">
          <Home />
        </div>
        <div className="flex w-[29px] shrink-0 items-center justify-start gap-[5px] pl-[4px]">
          <Doc />
          <Caret />
        </div>
        <div className="flex w-[33px] shrink-0 items-center gap-[4px] pl-[5px]">
          <OpenI />
          <Caret />
        </div>
        <div className="flex w-[30px] shrink-0 items-center gap-[5px] pl-[3px]">
          <Save />
          <Caret />
        </div>
        <div className="flex w-[33px] shrink-0 items-center gap-[5px] pl-[3px]">
          <Printer />
          <Caret />
        </div>
        <div className="flex w-[30px] shrink-0 items-center gap-[6px] pl-[4px]">
          <Undo />
          <Caret c="#aaa" />
        </div>
        <div className="flex h-[21px] w-[30px] shrink-0 border border-[#8f8f8f]">
          <div className="flex w-[17px] items-center justify-center bg-[#b4b4b4]">
            <Pointer />
          </div>
          <div className="flex flex-1 items-center justify-center bg-white">
            <Caret c="#222" />
          </div>
        </div>
        <div className="flex w-[23px] shrink-0 justify-center pl-[2px]">
          <Traffic />
        </div>
        <div className="flex w-[22px] shrink-0 justify-center">
          <ListI />
        </div>
        <div className="flex w-[37px] shrink-0 items-center gap-[7px] pl-[3px]">
          <Gear />
          <Caret />
        </div>
        <div className="ml-[12px] flex h-[16px] w-[132px] shrink-0 items-center rounded-[1px] border border-[#dadada] bg-white pl-[3px] text-[#555]">
          <div className="flex h-[12px] w-[12px] shrink-0 items-center justify-center rounded-full border border-[#1c5f80] text-[8px] font-bold leading-none text-[#1c5f80]">
            ?
          </div>
          <span className="ml-[4px] whitespace-nowrap">Поиск в Справке по SO</span>
          <svg width="9" height="9" viewBox="0 0 9 9" fill="none" className="ml-[5px] shrink-0">
            <circle cx="3.500" cy="3.500" r="2.700" stroke="#999" />
            <path d="M5.500 5.500 8.500 8.500" stroke="#999" />
          </svg>
          <span className="ml-[3px]">
            <Caret c="#999" />
          </span>
        </div>
        <div className="flex w-[25px] shrink-0 justify-end pr-[2px]">
          <svg width="14" height="14" viewBox="0 0 14 14">
            <circle cx="7" cy="7" r="6.500" fill="#fff" stroke="#222" strokeWidth="1.200" />
            <circle cx="7" cy="5.500" r="2.500" fill="#222" />
            <path d="M2.500 11c1-2 3-2.500 4.500-2.500S10.500 9 11.500 11C9 13.500 5 13.500 2.500 11z" fill="#222" />
          </svg>
        </div>
        <div className="flex w-[27px] shrink-0 justify-end">
          <div className="flex h-[14px] w-[14px] items-center justify-center rounded-full border border-[#333] text-[9px] leading-none text-[#222]">
            ?
          </div>
        </div>
        <div className="flex w-[24px] shrink-0 justify-end pr-[1px]">
          <WinGlyph k="min" c="#222" />
        </div>
        <div className="flex w-[29px] shrink-0 justify-end">
          <WinGlyph k="max" c="#222" />
        </div>
        <div className="flex w-[22px] shrink-0 justify-end">
          <WinGlyph k="x" c="#222" />
        </div>
      </div>

      <Ribbon />
      <TabRow />

      {/* main */}
      <div className="flex min-h-0 flex-1">
        <Panel />
        <div className="relative min-w-0 flex-1 bg-[#c4c8d3]">
          <Scene />
          <Hud />
          <TaskPane />
        </div>
      </div>

      {/* bottom tabs */}
      <div className="flex h-[11px] shrink-0 border-t border-b border-t-[#8f8f8f] border-b-[#cfcfcf] bg-white text-[7.900px] leading-none text-[#333]">
        <div className="flex w-[47px] shrink-0 items-center justify-center gap-[5px] bg-[#d4d4d4]">
          {["M5 0v6L2 3z", "M5 0v6L2 3z", "M2 0v6l3-3z", "M2 0v6l3-3z"].map((d, i) => (
            <svg key={i} width="6" height="6" viewBox="0 0 6 6">
              <path d={d} fill="#aaa" />
            </svg>
          ))}
        </div>
        <div className="flex w-[48px] shrink-0 items-center justify-center font-bold">Модель</div>
        <div className="flex w-[88px] shrink-0 items-center justify-center border-l border-r border-[#9a9a9a] bg-[#dedede]">
          Трехмерные виды
        </div>
        <div className="flex w-[127px] shrink-0 items-center justify-center border-r border-[#9a9a9a] bg-[#dedede]">
          Исследование движения 1
        </div>
      </div>

      {/* status */}
      <div className="flex h-[13px] shrink-0 items-center bg-[#f4f4f4] pl-[1px] text-[7.900px] leading-none text-[#222]">
        <span className="w-[702px] shrink-0 whitespace-nowrap">SOLIDWORKS Student Edition - Для учебных учреждений</span>
        <span className="w-[167px] shrink-0 whitespace-nowrap">Редактируется Деталь</span>
        <span className="w-[54px] shrink-0 whitespace-nowrap">Настройка</span>
        <Caret />
        <svg width="12" height="10" viewBox="0 0 12 10" className="ml-[19px] shrink-0" fill="none">
          <path d="M1 2c3-2 7-2 10 1l-2 6-4 0z" fill="#bbb" stroke="#666" strokeWidth="0.700" />
        </svg>
      </div>

      <Taskbar />
    </div>
  );
}
